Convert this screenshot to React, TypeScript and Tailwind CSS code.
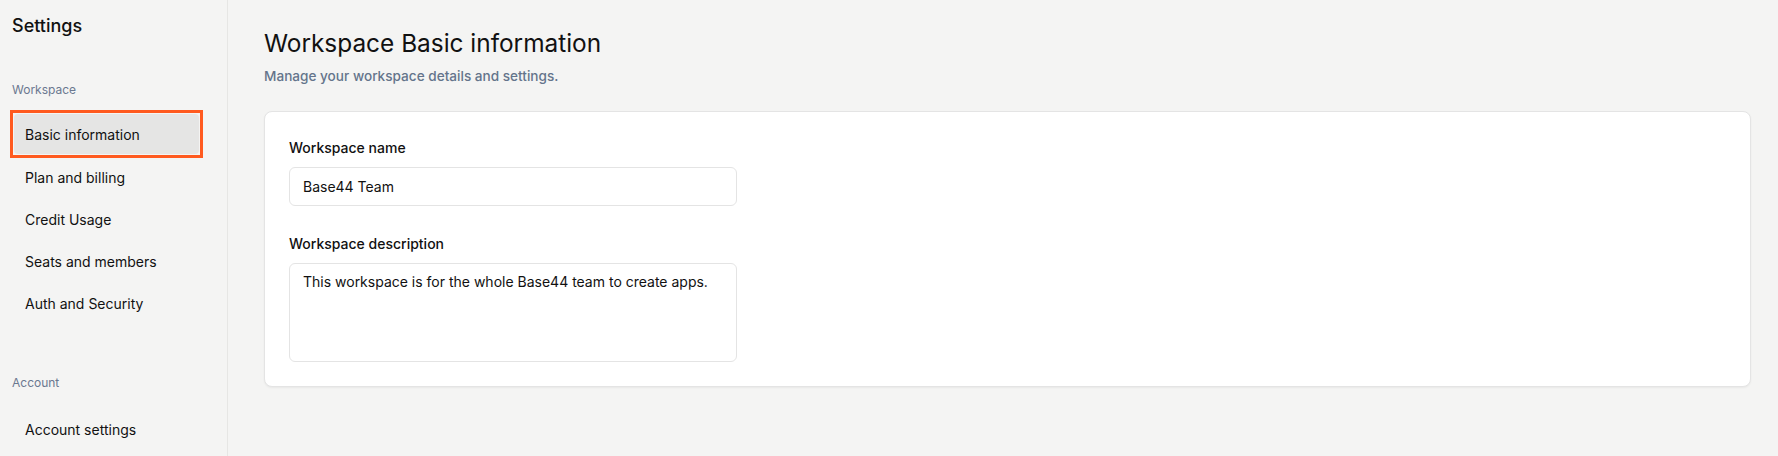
import React from "react";

const items = ["Plan and billing", "Credit Usage", "Seats and members", "Auth and Security"];

export default function App() {
  return (
    <div className="flex h-[456px] w-full bg-[#f4f4f3] text-[#111111]" style={{ fontFamily: "Inter, 'Noto Sans', sans-serif" }}>
      <aside className="flex w-[228px] shrink-0 flex-col border-r border-[#e6e6e4] px-[10px]">
        <div className="pl-[2px] pt-[14px] text-[18px] font-medium leading-[24px]">Settings</div>
        <div className="mt-[44px] pl-[2px] text-[12px] leading-[16px] text-[#6b7890]">Workspace</div>
        <div className="mt-[12px] w-[193px] border-[3px] border-[#ff5a1f] p-px">
          <div className="flex h-[40px] items-center rounded-[4px] bg-[#e5e5e4] pl-[11px] text-[14px]">Basic information</div>
        </div>
        <div className="-mt-[2px] flex flex-col">
          {items.map((t) => (
            <div key={t} className="flex h-[42px] items-center pl-[15px] text-[14px]">{t}</div>
          ))}
        </div>
        <div className="mt-[51px] pl-[2px] text-[12px] leading-[16px] text-[#6b7890]">Account</div>
        <div className="mt-[17px] flex h-[42px] items-center pl-[15px] text-[14px]">Account settings</div>
      </aside>
      <main className="flex flex-1 flex-col pl-[36px] pr-[27px]">
        <h1 className="pt-[27px] text-[24.4px] font-normal leading-[32px]">Workspace Basic information</h1>
        <p className="mt-[7px] text-[13.6px] font-medium leading-[20px] text-[#64748b]">Manage your workspace details and settings.</p>
        <section className="mt-[25px] rounded-[8px] border border-[#e4e4e4] bg-white px-[24px] pb-[24px] pt-[26px] shadow-[0_1px_2px_rgba(0,0,0,0.05)]">
          <div className="text-[14px] font-medium leading-[20px]">Workspace name</div>
          <div className="mt-[9px] flex h-[39px] w-[448px] items-center rounded-[6px] border border-[#e4e4e4] px-[13px] text-[14px]">Base44 Team</div>
          <div className="mt-[28px] text-[14px] font-medium leading-[20px]">Workspace description</div>
          <div className="mt-[9px] h-[99px] w-[448px] rounded-[6px] border border-[#e4e4e4] px-[13px] pt-[8px] text-[14px] leading-[20px]">
            This workspace is for the whole Base44 team to create apps.
          </div>
        </section>
      </main>
    </div>
  );
}
